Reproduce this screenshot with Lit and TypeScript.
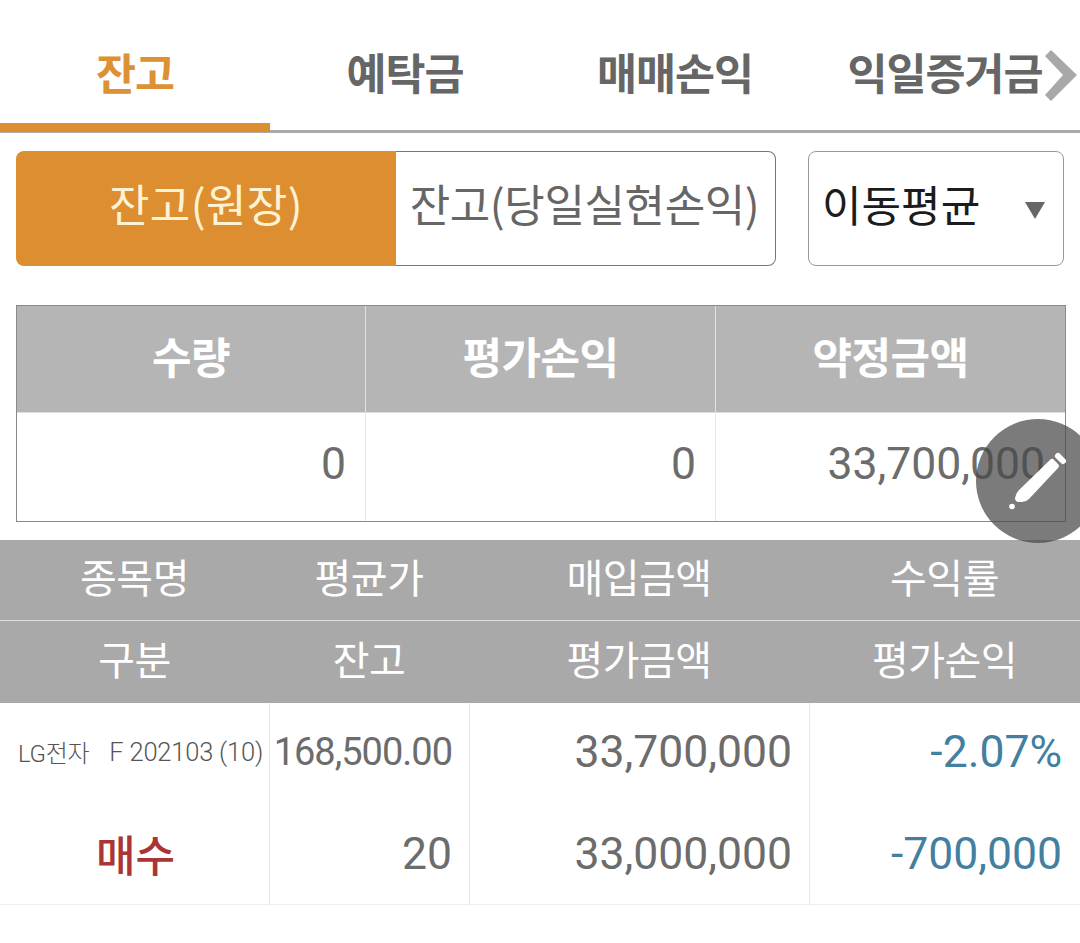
import { LitElement, html, css } from "lit";
import { customElement } from "lit/decorators.js";

@customElement("app-root")
export class AppRoot extends LitElement {
  static styles = css`
    :host { display: block; position: relative; width: 1080px; height: 943px; background: #fff; overflow: hidden; font-family: Roboto, "Noto Sans CJK KR", sans-serif; color: #666; }
    .tabs { display: grid; grid-template-columns: repeat(4, 270px); height: 103px; margin-top: 30px; border-bottom: 3px solid #aaa; box-sizing: border-box; position: relative; }
    .tab { display: flex; align-items: center; justify-content: center; font-size: 43.5px; font-weight: 700; height: 82px; color: #666; letter-spacing: -1px; white-space: nowrap; }
    .tab.on { color: #dd9135; position: relative; }
    .tab.on::after { content: ""; position: absolute; left: 0; right: 0; top: 93px; height: 9px; background: #dd8e31; }
    .chev { position: absolute; left: 1044px; top: 18px; width: 36px; height: 54px; }
    .controls { display: flex; padding: 18px 16px 0; height: 115px; justify-content: space-between; }
    .seg { display: flex; width: 760px; height: 115px; }
    .seg div { flex: 0 0 380px; display: flex; align-items: center; justify-content: center; font-family: "Noto Sans CJK KR", sans-serif; font-size: 44px; letter-spacing: -.4px; white-space: nowrap; padding-bottom: 12px; box-sizing: border-box; }
    .seg .on { background: #dd8e31; color: #fdf3d3; border-radius: 8px 0 0 8px; letter-spacing: .4px; }
    .seg .off { border: 1px solid #777; border-left: 0; border-radius: 0 8px 8px 0; padding-right: 2px; }
    .select { width: 256px; height: 115px; border: 1px solid #999; border-radius: 8px; box-sizing: border-box; display: flex; align-items: center; justify-content: space-between; padding: 0 18px 0 13px; font-size: 43px; color: #1c1c1c; }
    .select span:first-child { padding-bottom: 12px; }
    .tri { width: 0; height: 0; border-left: 10px solid transparent; border-right: 10px solid transparent; border-top: 17px solid #666; margin-top: 4px; }
    .summary { margin: 39px 14px 0 16px; width: 1050px; height: 217px; border: 1px solid #8a8a8a; box-sizing: border-box; display: grid; grid-template-columns: 348px 350px 1fr; grid-template-rows: 106px 1fr; }
    .sh { background: #b5b5b5; color: #fff; font-size: 43px; font-weight: 700; display: flex; align-items: center; justify-content: center; border-left: 1px solid #e2e2e2; letter-spacing: -.5px; padding-bottom: 8px; box-sizing: border-box; }
    .sh:first-child { border-left: 0; }
    .sv { font-size: 44.5px; color: #6c6c6c; display: flex; align-items: center; justify-content: flex-end; padding: 0 20px 6px 0; border-left: 1px solid #e6e6e6; border-top: 1px solid #ddd; }
    .sv.zero { padding-right: 19px; }
    .sv.first { border-left: 0; }
    .list { margin-top: 18px; display: grid; grid-template-columns: 269px 200px 340px 271px; }
    .lh { background: #a9a9a9; color: #fff; height: 80px; padding-bottom: 8px; box-sizing: border-box; font-size: 40px; display: flex; align-items: center; justify-content: center; letter-spacing: -.5px; white-space: nowrap; }
    .lh.r2 { height: 83px; border-top: 1px solid #ddd; }
    .c { height: 101px; display: flex; align-items: center; justify-content: flex-end; padding: 0 17px 3px 0; font-size: 44.5px; color: #6c6c6c; border-left: 1px solid #e8e8e8; box-sizing: border-box; white-space: nowrap; }
    .c.n { border-left: 0; padding: 0 0 4px 18px; justify-content: flex-start; }
    .c.bot { border-bottom: 1px solid #eee; padding-bottom: 1px; }
    .c.n.bot { color: #ab3535; font-size: 43px; font-weight: 500; justify-content: center; padding: 0 0 3px 2px; }
    .c.avg { font-size: 38px; letter-spacing: -1px; }
    .name { font-size: 24px; font-weight: 300; color: #555; letter-spacing: -.3px; }
    .code { font-size: 25.5px; font-weight: 300; color: #555; margin-left: 20px; letter-spacing: -.2px; }
    .c.blue { color: #437f9f; padding-right: 18px; }
    .fab { position: absolute; left: 976px; top: 419px; width: 124px; height: 124px; border-radius: 50%; background: rgba(72,72,72,.72); }
    .fab svg { position: absolute; left: 24px; top: 21px; width: 80px; height: 80px; }
  `;

  render() {
    return html`
      <div class="tabs">
        <div class="tab on">잔고</div>
        <div class="tab">예탁금</div>
        <div class="tab">매매손익</div>
        <div class="tab">익일증거금</div>
        <svg class="chev" viewBox="0 0 36 54"><polygon points="7,2 33,27 7,53 1,47 19,27 1,8" fill="#a8a8a8"/></svg>
      </div>
      <div class="controls">
        <div class="seg"><div class="on">잔고(원장)</div><div class="off">잔고(당일실현손익)</div></div>
        <div class="select"><span>이동평균</span><span class="tri"></span></div>
      </div>
      <div class="summary">
        <div class="sh">수량</div><div class="sh">평가손익</div><div class="sh">약정금액</div>
        <div class="sv first zero">0</div><div class="sv zero">0</div><div class="sv">33,700,000</div>
      </div>
      <div class="list">
        <div class="lh">종목명</div><div class="lh">평균가</div><div class="lh">매입금액</div><div class="lh">수익률</div>
        <div class="lh r2">구분</div><div class="lh r2">잔고</div><div class="lh r2">평가금액</div><div class="lh r2">평가손익</div>
        <div class="c n"><span class="name">LG전자</span><span class="code">F 202103 (10)</span></div><div class="c avg">168,500.00</div><div class="c">33,700,000</div><div class="c blue">-2.07%</div>
        <div class="c n bot">매수</div><div class="c bot">20</div><div class="c bot">33,000,000</div><div class="c bot blue">-700,000</div>
      </div>
      <div class="fab">
        <svg viewBox="0 0 80 80">
          <path d="M51 19 Q53 18 54 20 L58 24 Q60 26 58 28 L29 59 Q26 62 22 62 L18 62 Q15 61 15 58 L16 55 Q17 52 19 50 Z" fill="#fff"/>
          <line x1="58" y1="16" x2="63" y2="21" stroke="#fff" stroke-width="6" stroke-linecap="round"/>
          <circle cx="12" cy="66.500" r="2.800" fill="#fff"/>
        </svg>
      </div>
    `;
  }
}
